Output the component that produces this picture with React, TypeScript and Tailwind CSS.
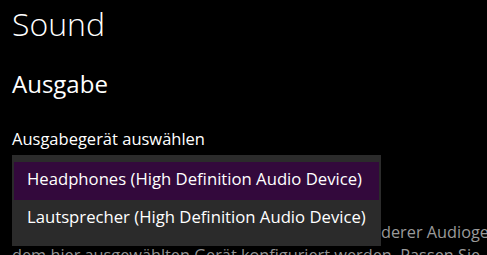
import React from "react";

export default function App() {
  return (
    <div className="relative w-[487px] h-[255px] overflow-hidden bg-black text-white font-['Open_Sans',sans-serif]">
      <div className="px-3 pt-[2px]">
        <h1 className="text-[32px] font-light leading-[44px]">Sound</h1>
        <h2 className="mt-[22px] text-[24px] leading-[32px]">Ausgabe</h2>
        <p className="mt-[28px] text-[16.5px] leading-[22px]">Ausgabegerät auswählen</p>
        <div className="mt-[12px] h-[36px] w-[369px] bg-[#2b2b2b]" />
        <p className="mt-[23px] text-[16.3px] leading-[23px] text-[#9a9a9a] whitespace-nowrap">
          <span className="inline-block w-[369px] overflow-hidden align-bottom">
            Bestimmte Apps können für die Verwendung an
          </span>
          derer Audiogeräte als der hier ausgewählten
          <br />
          dem hier ausgewählten Gerät konfiguriert werden. Passen Sie
        </p>
      </div>

      <ul className="absolute left-[12px] top-[155px] w-[369px] bg-[#2b2b2b] px-[2px] pt-[7px] pb-[8px] text-[16.7px] shadow-lg">
        <li className="h-[38px] flex items-center bg-[#33093c] pl-[13px] pb-[4px]">
          Headphones (High Definition Audio Device)
        </li>
        <li className="h-[38px] flex items-center pl-[13px] pb-[4px]">
          Lautsprecher (High Definition Audio Device)
        </li>
      </ul>
    </div>
  );
}
